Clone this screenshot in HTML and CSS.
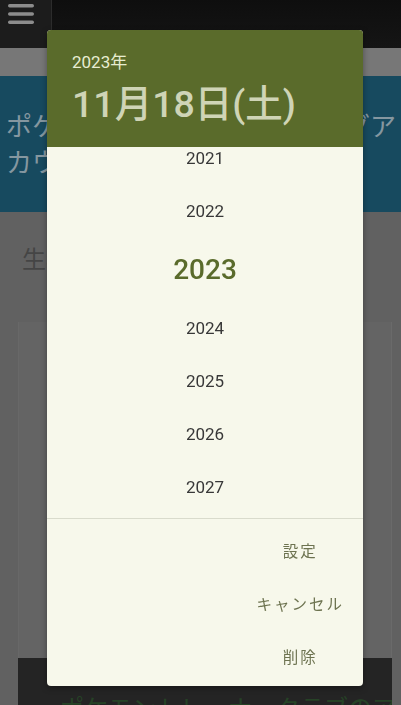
FILE: index.html
```html
<!DOCTYPE html>
<html lang="ja">
<head>
<meta charset="utf-8">
<title>日付選択</title>
<link rel="stylesheet" href="styles.css">
</head>
<body>
<div class="page">
  <header class="topbar">
    <div class="menu">
      <svg class="menu-icon" width="26" height="20" viewBox="0 0 26 20">
        <rect x="0" y="0" width="26" height="3.4" rx="1.7" fill="#8c8c8c"/>
        <rect x="0" y="8.3" width="26" height="3.4" rx="1.7" fill="#8c8c8c"/>
        <rect x="0" y="16.6" width="26" height="3.4" rx="1.7" fill="#8c8c8c"/>
      </svg>
    </div>
    <div class="bar-rest"></div>
  </header>
  <div class="strip"></div>
  <section class="banner">
    <div class="banner-line">ポケモントレーナークラブのグア</div>
    <div class="banner-line">カウントでログイン</div>
  </section>
  <main class="content">
    <div class="label">生年月日</div>
    <div class="card"></div>
    <div class="footer-box">
      <div class="footer-text">ポケモントレーナークラブのア</div>
    </div>
  </main>
</div>

<div class="dialog">
  <div class="dialog-head">
    <div class="head-year">2023年</div>
    <div class="head-date">11月18日(土)</div>
  </div>
  <div class="year-list">
    <div class="year-inner">
      <div class="year">2021</div>
      <div class="year">2022</div>
      <div class="year selected">2023</div>
      <div class="year">2024</div>
      <div class="year">2025</div>
      <div class="year">2026</div>
      <div class="year">2027</div>
    </div>
  </div>
  <div class="actions">
    <div class="btn-col">
      <div class="btn">設定</div>
      <div class="btn">キャンセル</div>
      <div class="btn">削除</div>
    </div>
  </div>
</div>
</body>
</html>
```

FILE: styles.css
```css
html, body {
  margin: 0;
  padding: 0;
}
body {
  width: 401px;
  height: 705px;
  overflow: hidden;
  background: #626262;
  font-family: Roboto, "Noto Sans CJK JP", sans-serif;
}
.page {
  display: flex;
  flex-direction: column;
  height: 705px;
}
.topbar {
  display: flex;
  height: 48px;
  flex: none;
  background: #121212;
}
.menu {
  width: 52px;
  background: #1c1c1c;
  border-right: 1px solid #2c2c2c;
  box-sizing: border-box;
  padding: 4px 0 0 8px;
}
.menu-icon {
  display: block;
}
.bar-rest {
  flex: 1;
  background: linear-gradient(#0e0e0e, #151515);
}
.strip {
  height: 28px;
  flex: none;
  background: #777777;
}
.banner {
  height: 136px;
  flex: none;
  box-sizing: border-box;
  padding: 31px 0 0 6px;
  background: #174a5f;
  overflow: hidden;
}
.banner-line {
  font-size: 26px;
  line-height: 36px;
  color: #8597a0;
  white-space: nowrap;
  font-family: "Noto Sans CJK JP", sans-serif;
}
.content {
  flex: 1;
  display: flex;
  flex-direction: column;
  background: #616161;
}
.label {
  margin: 29px 0 0 22px;
  font-size: 24px;
  line-height: 34px;
  color: #454545;
  font-family: "Noto Sans CJK JP", sans-serif;
}
.card {
  flex: 1;
  margin: 47px 9px 0 18px;
  background: #646464;
  border-left: 1px solid #686868;
  border-right: 1px solid #6a6a6a;
}
.footer-box {
  height: 47px;
  flex: none;
  margin: 0 9px 0 18px;
  background: #242424;
  overflow: hidden;
}
.footer-text {
  padding: 34px 0 0 42px;
  font-size: 24px;
  line-height: 30px;
  color: #264226;
  white-space: nowrap;
  font-family: "Noto Sans CJK JP", sans-serif;
}

/* dialog */
.dialog {
  position: fixed;
  left: 47px;
  top: 30px;
  width: 316px;
  height: 656px;
  display: flex;
  flex-direction: column;
  background: #f7f8eb;
  border-radius: 4px;
  overflow: hidden;
  box-shadow: 0 2px 6px rgba(0, 0, 0, 0.35);
}
.dialog-head {
  flex: none;
  height: 117px;
  box-sizing: border-box;
  padding: 21px 0 0 25px;
  background: #5a6b2b;
}
.head-year {
  font-size: 17px;
  line-height: 23px;
  color: #e8edd2;
}
.head-date {
  margin-top: 8px;
  font-size: 37.5px;
  line-height: 44px;
  font-weight: 500;
  color: #cfd4b6;
}
.year-list {
  flex: none;
  height: 371px;
  overflow: hidden;
}
.year-inner {
  margin-top: -15px;
}
.year {
  height: 53px;
  line-height: 53px;
  text-align: center;
  font-size: 17px;
  color: #383838;
}
.year.selected {
  height: 64px;
  line-height: 64px;
  font-size: 28px;
  font-weight: 500;
  color: #5a6b2b;
}
.actions {
  flex: 1;
  border-top: 1px solid #d9dbcc;
  display: flex;
  justify-content: flex-end;
  padding: 5px 11px 0 0;
}
.btn-col {
  display: flex;
  flex-direction: column;
}
.btn {
  height: 53px;
  line-height: 53px;
  padding: 0 8px;
  text-align: center;
  font-size: 15.5px;
  letter-spacing: 2px;
  color: #6d7350;
  font-family: "Noto Sans CJK JP", sans-serif;
}
```
